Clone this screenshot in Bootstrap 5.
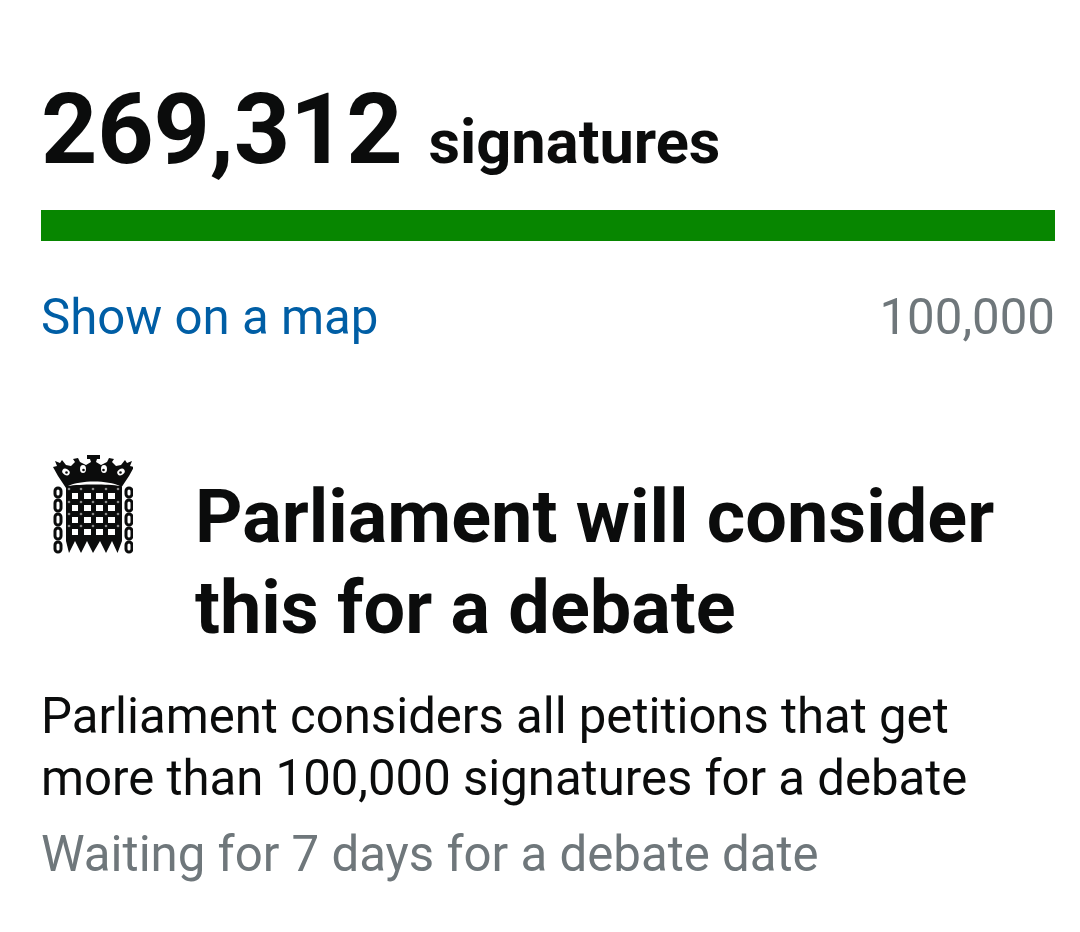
<!DOCTYPE html>
<html lang="en"><head><meta charset="utf-8"><title>Petition</title>
<link href="https://cdn.jsdelivr.net/npm/bootstrap@5.3.0/dist/css/bootstrap.min.css" rel="stylesheet">
<style>
html,body{background:#fff;font-family:Roboto,"Liberation Sans",sans-serif;color:#0b0c0c}
.pet-wrap{padding:75px 25px 0 41px}
.pet-count{font-size:98.4px;font-weight:700;line-height:110px;letter-spacing:-.2px}
.pet-label{font-size:61.4px;font-weight:700;line-height:110px;margin-left:26px}
.pet-bar{height:31px;background:#078600;margin-top:13px;border-radius:0}
.pet-row{margin-top:48px;font-size:49.2px;line-height:56px}
.pet-link{color:#005ea5;text-decoration:none}
.pet-muted{color:#6f777b}
.pet-head{margin-top:127px;gap:62px}
.pet-icon{width:80px;height:100px;flex:none;margin:-17px 0 0 12px}
.pet-title{font-size:73.8px;font-weight:700;line-height:91px;margin:0}
.pet-text{font-size:49.1px;line-height:62px;margin:31px 60px 0 0}
.pet-sub{font-size:49.2px;line-height:62px;margin:14px 0 0}
</style></head><body>
<div class="pet-wrap">
<div class="d-flex align-items-baseline"><span class="pet-count">269,312</span><span class="pet-label">signatures</span></div>
<div class="pet-bar"></div>
<div class="pet-row d-flex justify-content-between"><a class="pet-link" href="#">Show on a map</a><span class="pet-muted">100,000</span></div>
<div class="pet-head d-flex align-items-start">
<svg class="pet-icon" viewBox="53 455 80 100" aria-hidden="true">
<g fill="#0b0c0c"><path d="M66 487H122V541L117.500 553 112 541 106 553 100 541 93 553 87 541 81 553 75 541 69 553 66 541Z"/>
<path d="M66 488 58 476 53 467 57 466 55 461 60 463 62 460 66 465 71 466 75 462 73 459 78 458 80 462 86 465 91 462 90 459 87 459 87 455H100V459L97 459 96 462 101 465 107 462 109 458 114 459 112 462 116 466 121 465 125 460 127 463 132 461 130 466 134 467 129 476 121 488Z"/></g>
<g fill="#fff"><path d="M68 486C80 480 108 480 120 486 108 484 80 484 68 486Z"/>
<ellipse cx="66" cy="472" rx="4" ry="3" transform="rotate(35 66 472)"/><ellipse cx="83" cy="469" rx="3" ry="4"/><ellipse cx="104" cy="469" rx="3" ry="4"/><ellipse cx="121" cy="472" rx="4" ry="3" transform="rotate(-35 121 472)"/>
<path d="M72 493h6v6h-6zM84 493h7v6h-7zM96 493h7v6h-7zM108 493h7v6h-7zM72 505h6v6h-6zM84 505h7v6h-7zM96 505h7v6h-7zM108 505h7v6h-7zM72 517h6v6h-6zM84 517h7v6h-7zM96 517h7v6h-7zM108 517h7v6h-7zM72 529h6v6h-6zM84 529h7v6h-7zM96 529h7v6h-7zM108 529h7v6h-7z"/></g>
<g fill="#0b0c0c"><circle cx="66.500" cy="472.500" r="1.300"/><circle cx="83.500" cy="470" r="1.300"/><circle cx="103.500" cy="470" r="1.300"/><circle cx="120.500" cy="472.500" r="1.300"/></g>
<g fill="#8a8a8a"><circle cx="69" cy="489" r="1.300"/><circle cx="81" cy="489" r="1.300"/><circle cx="93" cy="489" r="1.300"/><circle cx="106" cy="489" r="1.300"/><circle cx="118" cy="489" r="1.300"/><circle cx="69" cy="502" r="1.300"/><circle cx="81" cy="502" r="1.300"/><circle cx="93" cy="502" r="1.300"/><circle cx="106" cy="502" r="1.300"/><circle cx="118" cy="502" r="1.300"/><circle cx="69" cy="514" r="1.300"/><circle cx="81" cy="514" r="1.300"/><circle cx="93" cy="514" r="1.300"/><circle cx="106" cy="514" r="1.300"/><circle cx="118" cy="514" r="1.300"/><circle cx="69" cy="526" r="1.300"/><circle cx="81" cy="526" r="1.300"/><circle cx="93" cy="526" r="1.300"/><circle cx="106" cy="526" r="1.300"/><circle cx="118" cy="526" r="1.300"/></g>
<g fill="none" stroke="#0b0c0c" stroke-width="3"><rect x="55" y="488" width="6" height="9" rx="3"/><rect x="55" y="500" width="6" height="11" rx="3"/><rect x="55" y="514" width="6" height="11" rx="3"/><rect x="55" y="528" width="6" height="11" rx="3"/><rect x="55" y="542" width="6" height="10" rx="3"/><rect x="126" y="488" width="6" height="9" rx="3"/><rect x="126" y="500" width="6" height="11" rx="3"/><rect x="126" y="514" width="6" height="11" rx="3"/><rect x="126" y="528" width="6" height="11" rx="3"/><rect x="126" y="542" width="6" height="10" rx="3"/></g>
</svg>
<h2 class="pet-title">Parliament will consider this for a debate</h2>
</div>
<p class="pet-text">Parliament considers all petitions that get more than 100,000 signatures for a debate</p>
<p class="pet-sub pet-muted">Waiting for 7 days for a debate date</p>
</div>
<script src="https://cdn.jsdelivr.net/npm/bootstrap@5.3.0/dist/js/bootstrap.bundle.min.js"></script>
</body></html>
